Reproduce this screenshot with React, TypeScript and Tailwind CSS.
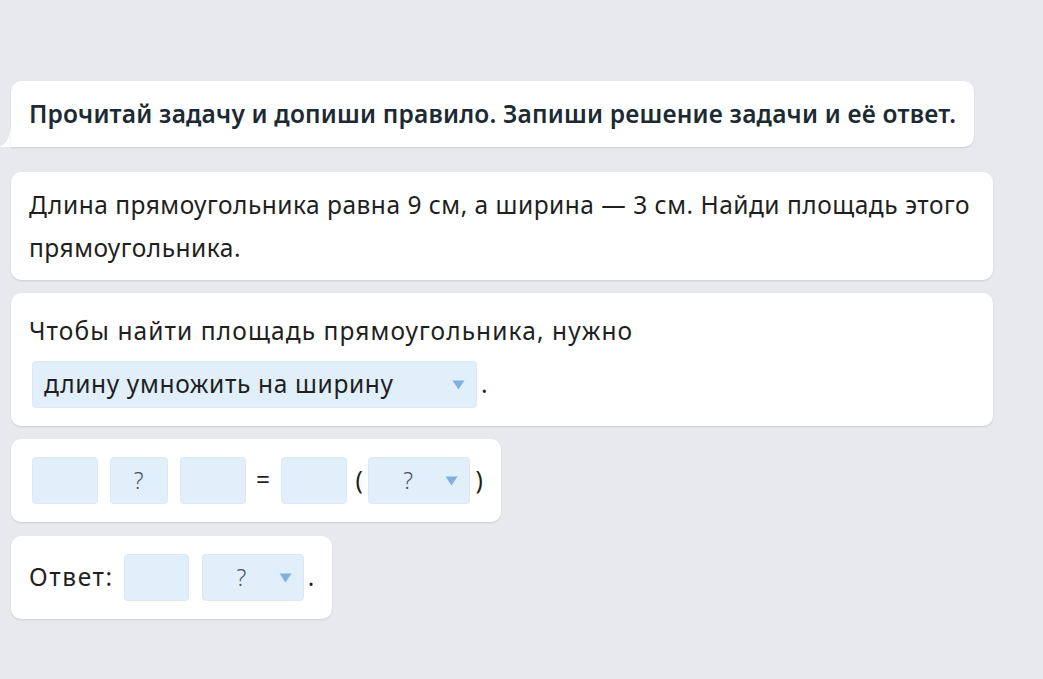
import * as React from "react";

const font = { fontFamily: '"Noto Sans", "Open Sans", sans-serif' };

const Triangle: React.FC = () => (
  <svg width="13" height="10" viewBox="0 0 13 10" className="shrink-0">
    <path d="M0.5 0.5 L12.5 0.5 L6.5 9.5 Z" fill="#80b0e0" />
  </svg>
);

const Box: React.FC<{ w: string; children?: React.ReactNode }> = ({ w, children }) => (
  <div
    className={`${w} flex h-[47px] shrink-0 items-center justify-center rounded-[4px] border border-[#d9e9f7] bg-[#e1effb] text-[23px] font-light text-[#4a5560]`}
  >
    {children}
  </div>
);

const Dropdown: React.FC<{ w: string; label: string }> = ({ w, label }) => (
  <div
    className={`${w} relative flex h-[47px] shrink-0 items-center rounded-[4px] border border-[#d9e9f7] bg-[#e1effb] text-[23px] font-light text-[#4a5560]`}
  >
    <span className="flex-1 pr-[22px] text-center">{label}</span>
    <span className="absolute right-[11px] top-[18px]">
      <Triangle />
    </span>
  </div>
);

const Card: React.FC<{ className?: string; children: React.ReactNode }> = ({ className, children }) => (
  <div className={`rounded-[10px] bg-white shadow-[0_1px_2px_rgba(0,0,0,0.12)] ${className ?? ""}`}>{children}</div>
);

export default function App() {
  return (
    <div
      className="min-h-screen w-full bg-[#e8e9ee] pl-[11px] pt-[81px] text-[24.5px] tracking-[0.5px] text-[#1f1f1f]"
      style={font}
    >
      <div className="flex flex-col items-start">
        {/* Instruction bubble */}
        <div className="relative">
          <svg className="absolute bottom-0 left-[-11px]" width="20" height="24" viewBox="0 0 20 24">
            <path d="M20 0 L20 24 L0 24 Q10 20 11 0 Z" fill="#ffffff" />
          </svg>
          <Card className="relative flex h-[66px] items-center rounded-bl-none px-[18px]">
            <span className="font-semibold tracking-[0.2px] text-[#1c2a33]">
              Прочитай задачу и допиши правило. Запиши решение задачи и её ответ.
            </span>
          </Card>
        </div>

        <Card className="mt-[25px] w-[982px] px-[18px] py-[11px]">
          <p className="leading-[43px]">
            Длина прямоугольника равна 9 см, а ширина — 3 см. Найди площадь этого прямоугольника.
          </p>
        </Card>

        <Card className="mt-[13px] w-[982px] px-[18px] pt-[16px] pb-[18px]">
          <p className="leading-[43px] tracking-[1.1px]">Чтобы найти площадь прямоугольника, нужно</p>
          <div className="mt-[9px] flex items-center pl-[3px]">
            <div className="relative flex h-[47px] w-[445px] items-center rounded-[4px] border border-[#d9e9f7] bg-[#e1effb] pl-[11px] tracking-[0.65px]">
              длину умножить на ширину
              <span className="absolute right-[11px] top-[18px]">
                <Triangle />
              </span>
            </div>
            <span className="ml-[4px]">.</span>
          </div>
        </Card>

        <Card className="mt-[13px] flex items-center py-[18px] pl-[21px] pr-[18px]">
          <Box w="w-[66px]" />
          <Box w="w-[58px] ml-[12px]">?</Box>
          <Box w="w-[66px] ml-[12px]" />
          <span className="ml-[10px] mr-[10px]">=</span>
          <Box w="w-[66px]" />
          <span className="ml-[9px] mr-[5px]">(</span>
          <Dropdown w="w-[102px]" label="?" />
          <span className="ml-[5px]">)</span>
        </Card>

        <Card className="mt-[14px] flex items-center py-[18px] pl-[18px] pr-[17px]">
          <span className="tracking-[1.6px]">Ответ:</span>
          <Box w="w-[65px] ml-[10px]" />
          <Dropdown w="w-[102px] ml-[13px]" label="?" />
          <span className="ml-[4px]">.</span>
        </Card>
      </div>
    </div>
  );
}
